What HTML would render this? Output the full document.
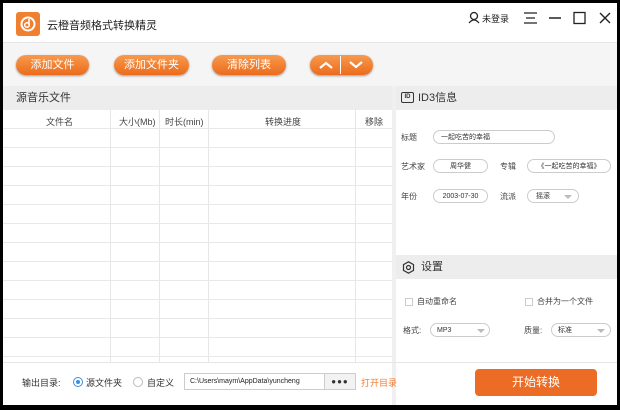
<!DOCTYPE html><html><head><meta charset="utf-8"><style>
*{margin:0;padding:0;box-sizing:border-box}
body{width:620px;height:410px;background:#000;font-family:"Liberation Sans","Noto Sans CJK SC",sans-serif;position:relative;overflow:hidden;color:#333}
.win{position:absolute;left:3px;top:3px;width:614px;height:402px;background:#fff}
.a{position:absolute}
.btn{position:absolute;height:20px;border-radius:10px;background:linear-gradient(#f79a4e,#ec6b1c);color:#fff;font-size:11px;text-align:center;line-height:20px;box-shadow:0 1px 2px #999}
.hd{position:absolute;background:#ededed;font-size:11px;color:#333;line-height:24px}
.vl{position:absolute;width:1px;background:#e6e6e6}
.hl{position:absolute;height:1px;background:#e8e8e8}
.t{position:absolute;font-size:9px;color:#444}
.pill{position:absolute;height:14px;border:1px solid #ccc;border-radius:7px;font-size:7px;color:#333;display:flex;align-items:center;justify-content:center}
.pill.l{justify-content:flex-start}
.tri{position:absolute;width:0;height:0;border-left:4px solid transparent;border-right:4px solid transparent;border-top:4px solid #bbb}
.cb{position:absolute;width:8px;height:8px;border:1px solid #ccc}
</style></head><body><div class="win">
<div class="a" style="left:13px;top:9px;width:24px;height:24px;border-radius:3px;background:#f08030"></div>
<svg class="a" style="left:15px;top:11px" width="20" height="20"><circle cx="10" cy="10" r="6.5" fill="none" stroke="#fff" stroke-width="2"/><circle cx="9" cy="11" r="2.3" fill="none" stroke="#fff" stroke-width="1.5"/><path d="M11 11V5" stroke="#fff" stroke-width="1.5"/></svg>
<div class="a" style="left:44px;top:14px;font-size:11px;color:#222">云橙音频格式转换精灵</div>
<svg class="a" style="left:465px;top:8px" width="12" height="13"><circle cx="6" cy="5" r="3.5" fill="none" stroke="#222" stroke-width="1.3"/><path d="M1 12 Q6 6 11 12" fill="none" stroke="#222" stroke-width="1.3"/></svg>
<div class="a" style="left:479px;top:9px;font-size:9px;color:#222">未登录</div>
<svg class="a" style="left:520px;top:8px" width="92" height="14"><path d="M1 2h13M3 7h9M1 12h13" stroke="#222" stroke-width="1.3"/><path d="M26 7h12" stroke="#222" stroke-width="1.5"/><rect x="51" y="1.5" width="11" height="11" fill="none" stroke="#222" stroke-width="1.3"/><path d="M77 2l10 10M87 2l-10 10" stroke="#222" stroke-width="1.4"/></svg>
<div class="a" style="left:0;top:39px;width:614px;height:44px;background:#f5f5f5;border-top:1px solid #e6e6e6"></div>
<div class="btn" style="left:13px;top:52px;width:73px">添加文件</div>
<div class="btn" style="left:111px;top:52px;width:75px">添加文件夹</div>
<div class="btn" style="left:209px;top:52px;width:74px">清除列表</div>
<div class="btn" style="left:307px;top:52px;width:63px;border-radius:10px"></div>
<div class="a" style="left:337px;top:53px;width:1px;height:18px;background:#fff"></div>
<svg class="a" style="left:313px;top:56px" width="56" height="12"><path d="M4 9l6-5 6 5M34 3l6 5 6-5" fill="none" stroke="#fff" stroke-width="2.2"/></svg>
<div class="hd" style="left:0;top:83px;width:389px;height:24px;padding-left:13px">源音乐文件</div>
<div class="hd" style="left:393px;top:83px;width:221px;height:24px;padding-left:22px;font-size:11px">ID3信息</div>
<div class="a" style="left:398px;top:89px;width:13px;height:11px;border:1px solid #333;border-radius:2px;font-size:6px;font-weight:bold;text-align:center;line-height:9px">ID</div>
<div class="a" style="left:389px;top:83px;width:4px;height:319px;background:#f0f0f0"></div>
<div class="t" style="left:43px;top:112px">文件名</div>
<div class="t" style="left:116px;top:112px">大小(Mb)</div>
<div class="t" style="left:162px;top:112px">时长(min)</div>
<div class="t" style="left:262px;top:112px">转换进度</div>
<div class="t" style="left:362px;top:112px">移除</div>
<div class="vl" style="left:107px;top:107px;height:252px"></div>
<div class="vl" style="left:156px;top:107px;height:252px"></div>
<div class="vl" style="left:205px;top:107px;height:252px"></div>
<div class="vl" style="left:352px;top:107px;height:252px"></div>
<div class="hl" style="left:0;top:125px;width:389px"></div>
<div class="hl" style="left:0;top:144px;width:389px"></div>
<div class="hl" style="left:0;top:163px;width:389px"></div>
<div class="hl" style="left:0;top:182px;width:389px"></div>
<div class="hl" style="left:0;top:201px;width:389px"></div>
<div class="hl" style="left:0;top:220px;width:389px"></div>
<div class="hl" style="left:0;top:239px;width:389px"></div>
<div class="hl" style="left:0;top:258px;width:389px"></div>
<div class="hl" style="left:0;top:277px;width:389px"></div>
<div class="hl" style="left:0;top:296px;width:389px"></div>
<div class="hl" style="left:0;top:315px;width:389px"></div>
<div class="hl" style="left:0;top:334px;width:389px"></div>
<div class="hl" style="left:0;top:353px;width:389px"></div>
<div class="t" style="left:398px;top:129px;font-size:8px">标题</div>
<div class="pill l" style="left:430px;top:127px;width:122px;padding-left:7px">一起吃苦的幸福</div>
<div class="t" style="left:398px;top:158px;font-size:8px">艺术家</div>
<div class="pill" style="left:430px;top:156px;width:55px">周华健</div>
<div class="t" style="left:497px;top:158px;font-size:8px">专辑</div>
<div class="pill" style="left:524px;top:156px;width:84px">《一起吃苦的幸福》</div>
<div class="t" style="left:398px;top:188px;font-size:8px">年份</div>
<div class="pill" style="left:430px;top:186px;width:55px">2003-07-30</div>
<div class="t" style="left:497px;top:188px;font-size:8px">流派</div>
<div class="pill l" style="left:524px;top:186px;width:52px;padding-left:8px">摇滚</div>
<div class="tri" style="left:561px;top:192px"></div>
<div class="hd" style="left:393px;top:252px;width:221px;height:24px;padding-left:25px">设置</div>
<svg class="a" style="left:399px;top:258px" width="13" height="13"><polygon points="6.5,0.8 11.5,3.6 11.5,9.4 6.5,12.2 1.5,9.4 1.5,3.6" fill="none" stroke="#333" stroke-width="1.2"/><circle cx="6.5" cy="6.5" r="2" fill="none" stroke="#333" stroke-width="1.2"/></svg>
<div class="cb" style="left:402px;top:295px"></div><div class="t" style="left:414px;top:293px;font-size:8px">自动重命名</div>
<div class="cb" style="left:522px;top:295px"></div><div class="t" style="left:534px;top:293px;font-size:8px">合并为一个文件</div>
<div class="t" style="left:400px;top:322px;font-size:8px">格式:</div>
<div class="pill l" style="left:427px;top:320px;width:60px;padding-left:6px">MP3</div><div class="tri" style="left:474px;top:326px"></div>
<div class="t" style="left:521px;top:322px;font-size:8px">质量:</div>
<div class="pill l" style="left:548px;top:320px;width:60px;padding-left:6px">标准</div><div class="tri" style="left:594px;top:326px"></div>
<div class="a" style="left:0;top:359px;width:614px;height:1px;background:#e6e6e6"></div>
<div class="t" style="left:19px;top:373px;font-size:9px;color:#333">输出目录:</div>
<div class="a" style="left:70px;top:374px;width:10px;height:10px;border:1px solid #3b8fe0;border-radius:50%"><div style="margin:2px;width:4px;height:4px;border-radius:50%;background:#3b8fe0"></div></div>
<div class="t" style="left:83px;top:373px;font-size:9px;color:#333">源文件夹</div>
<div class="a" style="left:130px;top:374px;width:10px;height:10px;border:1px solid #bbb;border-radius:50%"></div>
<div class="t" style="left:144px;top:373px;font-size:9px;color:#333">自定义</div>
<div class="a" style="left:181px;top:370px;width:172px;height:17px;border:1px solid #ccc;font-size:7px;line-height:15px;padding-left:5px;color:#222">C:\Users\maym\AppData\yuncheng</div>
<div class="a" style="left:321px;top:370px;width:32px;height:17px;border:1px solid #ccc;background:#f2f2f2;font-size:8px;text-align:center;line-height:15px;letter-spacing:1px">●●●</div>
<div class="t" style="left:358px;top:373px;font-size:9px;color:#f07a30">打开目录</div>
<div class="a" style="left:472px;top:366px;width:122px;height:27px;border-radius:4px;background:#ec6c25;color:#fff;font-size:12px;text-align:center;line-height:27px">开始转换</div>
</div></body></html>
